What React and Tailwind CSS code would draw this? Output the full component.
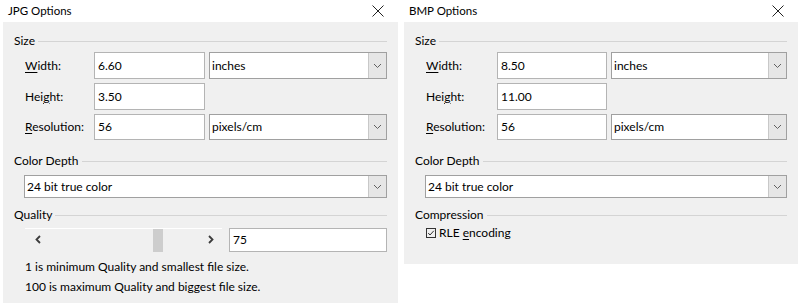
import React from "react";

const Chevron = () => (
  <svg width="9" height="6" viewBox="0 0 9 6" className="text-[#606060]">
    <path d="M1 1 L4.5 4.5 L8 1" fill="none" stroke="currentColor" strokeWidth="1" />
  </svg>
);

const Arrow = ({ dir }) => (
  <svg width="6" height="9" viewBox="0 0 6 9">
    <path
      d={dir === "left" ? "M5 1 L1.5 4.5 L5 8" : "M1 1 L4.5 4.5 L1 8"}
      fill="none"
      stroke="#3c3c3c"
      strokeWidth="1.8"
    />
  </svg>
);

const Select = ({ value, className = "" }) => (
  <div className={`flex items-stretch bg-white border border-[#a0a0a0] ${className}`}>
    <div className="flex-1 pl-[2px] flex items-center leading-none">{value}</div>
    <div className="w-[18px] flex items-center justify-center bg-[#e6e6e6] border-l border-[#c8c8c8]">
      <Chevron />
    </div>
  </div>
);

const Input = ({ value, className = "" }) => (
  <div className={`bg-white border border-[#b4b4b4] pl-[3px] flex items-center ${className}`}>
    {value}
  </div>
);

const Group = ({ title }) => (
  <div className="flex items-center gap-[3px] h-[14px]">
    <span>{title}</span>
    <div className="flex-1 h-[1px] bg-[#d4d4d4] mt-[1px]" />
  </div>
);

const Label = ({ pre = "", k, post = "" }) => (
  <span>
    {pre}
    <span className="underline underline-offset-2">{k}</span>
    {post}
  </span>
);

const Dialog = ({ title, w, h, labelW, inputW, bodyH, children }) => (
  <div className="flex flex-col">
    <div className="h-[22px] flex items-center justify-between pl-[5px] pr-[14px] bg-white">
      <span className="text-[11.5px]">{title}</span>
      <svg width="12" height="12" viewBox="0 0 12 12">
        <path d="M0.5 0.5 L11.5 11.5 M11.5 0.5 L0.5 11.5" stroke="#222" strokeWidth="1" />
      </svg>
    </div>
    <div className={`bg-[#f0f0f0] px-[11px] pt-[12px] ${bodyH}`}>
      <Group title="Size" />
      <div className="flex flex-col gap-[4px] mt-[4px] pl-[11px]">
        <div className="flex items-center h-[27px] gap-[4px]">
          <div className="shrink-0" style={{ width: labelW }}><Label k="W" post="idth:" /></div>
          <Input value={w} className={`h-full ${inputW}`} />
          <Select value="inches" className="h-full flex-1" />
        </div>
        <div className="flex items-center h-[27px] gap-[4px]">
          <div className="shrink-0" style={{ width: labelW }}><Label pre="Hei" k="g" post="ht:" /></div>
          <Input value={h} className={`h-full ${inputW}`} />
        </div>
        <div className="flex items-center h-[26px] gap-[4px]">
          <div className="shrink-0" style={{ width: labelW }}><Label k="R" post="esolution:" /></div>
          <Input value="56" className={`h-full ${inputW}`} />
          <Select value="pixels/cm" className="h-full flex-1" />
        </div>
      </div>
      <div className="mt-[14px]">
        <Group title="Color Depth" />
      </div>
      <div className="pl-[10px] mt-[7px]">
        <Select value="24 bit true color" className="h-[23px]" />
      </div>
      {children}
    </div>
  </div>
);

export default function App() {
  return (
    <div
      className="w-[800px] h-[307px] bg-white flex text-[12px] text-black overflow-hidden"
      style={{ fontFamily: "Lato, 'Noto Sans', sans-serif" }}
    >
      <div className="w-[401px] px-[3px] shrink-0">
        <Dialog title="JPG Options" w="6.60" h="3.50" labelW="65px" inputW="w-[111px]" bodyH="h-[281px]">
          <div className="mt-[10px]">
            <Group title="Quality" />
          </div>
          <div className="flex items-center gap-[7px] mt-[6px] pl-[11px] h-[24px]">
            <div className="w-[197px] h-full relative border-t border-white flex items-center">
              <span className="absolute left-[10px] top-[6px] flex"><Arrow dir="left" /></span>
              <div className="absolute left-[128px] top-0 bottom-0 w-[10px] bg-[#cdcdcd]" />
              <span className="absolute left-[183px] top-[6px] flex"><Arrow dir="right" /></span>
            </div>
            <Input value="75" className="h-[24px] flex-1" />
          </div>
          <div className="pl-[11px] mt-[5px] leading-[20px]">
            <div>1 is minimum Quality and smallest file size.</div>
            <div>100 is maximum Quality and biggest file size.</div>
          </div>
        </Dialog>
      </div>
      <div className="w-[399px] pl-[3px] pr-[2px] shrink-0">
        <Dialog title="BMP Options" w="8.50" h="11.00" labelW="67px" inputW="w-[110px]" bodyH="h-[242px]">
          <div className="mt-[10px]">
            <Group title="Compression" />
          </div>
          <div className="pl-[11px] mt-[3px] flex items-center gap-[3px] h-[16px]">
            <svg width="10" height="10" viewBox="0 0 10 10">
              <rect x="0.5" y="0.5" width="9" height="9" fill="none" stroke="#333" strokeWidth="1" />
              <path d="M2.2 5 L4 7 L7.8 2.8" fill="none" stroke="#333" strokeWidth="1" />
            </svg>
            <span>RLE <span className="underline underline-offset-2">e</span>ncoding</span>
          </div>
        </Dialog>
      </div>
    </div>
  );
}
